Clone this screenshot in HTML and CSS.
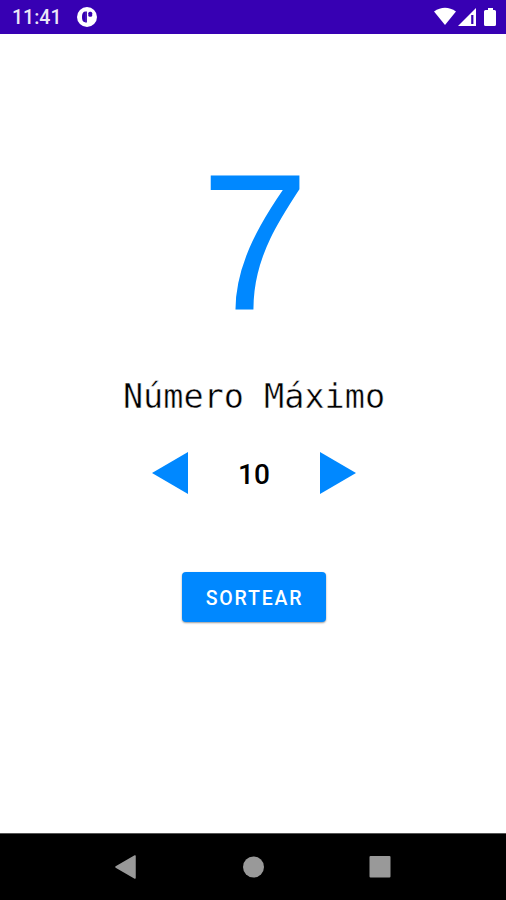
FILE: index.html
```html
<!DOCTYPE html>
<html lang="pt-BR">
<head>
    <meta charset="UTF-8">
    <title>Sorteador</title>
    <meta name="viewport" content="width=device-width">
    <link rel="stylesheet" href="styles.css">
</head>
<body>
    <header class="status">
        <span class="clock">11:41</span>
        <svg class="notice" width="20" height="20" viewBox="0 0 20 20">
            <circle cx="10" cy="10" r="10" fill="#fff"/>
            <path d="M8 4.600C5.900 5 5 7 5 10s.7 5 3 5.300z" fill="#3700b3"/>
            <path d="M9 4.500v11" stroke="#3700b3" stroke-width="1.800"/>
            <rect x="11.300" y="4.700" width="3.900" height="5" rx="1.500" fill="#3700b3"/>
        </svg>
        <svg class="signals" width="64" height="20" viewBox="0 0 64 20">
            <path d="M0 4.500Q11 -3 22 4.500L11 18z" fill="#fff"/>
            <path d="M24 19L42 1v18z" fill="#fff"/>
            <path d="M38.300 8v9" stroke="#3700b3" stroke-width="2.200"/>
            <path d="M50 4.500q0-1.500 1.500-1.500H54V1h5v2h1.500Q62 3 62 4.500v13q0 1.500-1.500 1.500h-9Q50 19 50 17.500z" fill="#fff"/>
        </svg>
    </header>
    <main>
        <div class="result">7</div>
        <h1>Número Máximo</h1>
        <div class="picker">
            <svg width="36" height="42" viewBox="0 0 36 42"><path d="M0 21L36 0v42z"/></svg>
            <span class="max">10</span>
            <svg width="36" height="42" viewBox="0 0 36 42"><path d="M36 21L0 0v42z"/></svg>
        </div>
        <button class="draw" type="button">SORTEAR</button>
    </main>
    <nav>
        <svg width="21" height="24" viewBox="0 0 21 24"><path d="M1 12L20 1v22z" stroke-width="1.500" stroke-linejoin="round"/></svg>
        <svg width="22" height="22" viewBox="0 0 22 22"><circle cx="11.500" cy="11" r="10.500"/></svg>
        <svg width="22" height="22" viewBox="0 0 22 22"><rect x=".5" width="21" height="21.500" rx="1"/></svg>
    </nav>
</body>
</html>
```
FILE: styles.css
```css
* {
    box-sizing: border-box;
}
body {
    display: flex;
    flex-direction: column;
    margin: 0;
    height: 900px;
    background: #fff;
    font-family: Roboto, sans-serif;
    overflow: hidden;
}
.status {
    display: flex;
    align-items: center;
    height: 34px;
    padding: 0 8px 0 12px;
    background: #3700b3;
    color: #fff;
}
.clock {
    width: 65px;
    font-size: 19.5px;
    font-weight: 500;
    line-height: 34px;
    opacity: .9;
    padding-top: 2px;
}
.signals {
    margin-left: auto;
}
main {
    display: flex;
    flex: 1;
    flex-direction: column;
    align-items: center;
    padding-left: 2px;
}
.result {
    margin-top: 108px;
    padding-left: 2px;
    height: 200px;
    color: #0088ff;
    font: 195px/200px "Liberation Sans", sans-serif;
}
/* white outline thins the monospace strokes */
h1 {
    margin: 35px 0 0;
    color: #000;
    font: 33.5px/40px "DejaVu Sans Mono", monospace;
    -webkit-text-stroke: .45px #fff;
}
.picker {
    display: flex;
    align-items: center;
    justify-content: space-between;
    width: 204px;
    height: 42px;
    margin-top: 35px;
    fill: #0088ff;
}
.max {
    padding-top: 3px;
    font-size: 28px;
    font-weight: 500;
}
.draw {
    margin-top: 78px;
    padding: 2px 0 0 1px;
    width: 144px;
    height: 50px;
    border: 0;
    border-radius: 4px;
    background: #0088ff;
    color: #fff;
    font: 500 19.5px Roboto, sans-serif;
    letter-spacing: 1.8px;
    box-shadow: 0 1px 2px rgba(0, 0, 0, .4);
}
nav {
    display: flex;
    align-items: center;
    justify-content: space-between;
    height: 67px;
    padding: 0 115px;
    background: #000;
    border-top: 1px solid #555;
    fill: #999;
    stroke: #999;
    stroke-width: 0;
}
```
